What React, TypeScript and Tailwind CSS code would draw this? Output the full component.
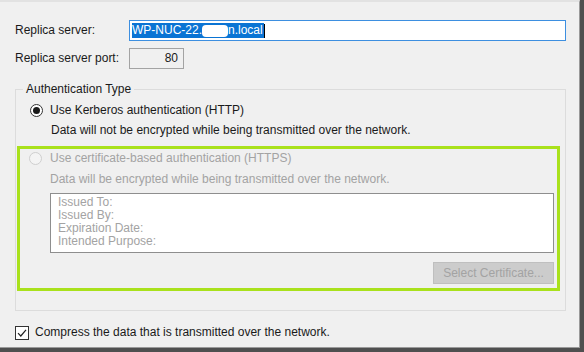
import React from "react";

export default function App() {
  return (
    <div className="w-[584px] h-[352px] flex bg-[#4f4f4f] font-['Liberation_Sans',sans-serif] text-[12px] leading-[15px] text-[#1a1a1a]">
      <div className="w-[580px] h-[348px] flex flex-col bg-[#f0f0f0] border-t-2 border-r border-b border-t-[#e2e2e2] border-r-[#9a9a9a] border-b-[#9a9a9a] pl-[15px] pr-[13px]">
        {/* server row */}
        <div className="flex items-center mt-[18px] h-[21px]">
          <span className="w-[114px]">Replica server:</span>
          <div className="flex-1 h-[21px] border border-[#3d8fe0] bg-white flex items-center pl-[2px]">
            <span className="flex items-center h-[15px] bg-[#0a74d4] text-white pr-[1px]">
              WP-NUC-22.
              <span className="inline-block w-[26px] h-[12px] bg-white rounded-sm" />
              n.local
            </span>
            <span className="w-px h-[14px] bg-black" />
          </div>
        </div>

        {/* port row */}
        <div className="flex items-center mt-[7px] h-[21px]">
          <span className="w-[114px]">Replica server port:</span>
          <div className="w-[55px] h-[21px] border border-[#a3a3a3] flex items-center justify-end pr-[5px]">
            80
          </div>
        </div>

        {/* group box */}
        <fieldset className="mt-[13px] border border-[#dcdcdc] pr-[5px] pb-[19px]">
          <legend className="ml-[7px] px-[3px]">Authentication Type</legend>

          <div className="flex items-center mt-[6px] ml-[14px]">
            <span className="w-[13px] h-[13px] rounded-full border border-[#333] bg-white flex items-center justify-center">
              <span className="w-[7px] h-[7px] rounded-full bg-[#1a1a1a]" />
            </span>
            <span className="ml-[7px]">Use Kerberos authentication (HTTP)</span>
          </div>
          <div className="ml-[35px] mt-[5px]">
            Data will not be encrypted while being transmitted over the network.
          </div>

          {/* highlighted area */}
          <div className="mt-[8px] ml-px border-[3px] border-[#a9e11c] pl-[9px] pr-[3px] pt-[2px] pb-[4px] text-[#a3a3a3]">
            <div className="flex items-center">
              <span className="w-[13px] h-[13px] rounded-full border border-[#cfcfcf] bg-[#f4f4f4]" />
              <span className="ml-[8px]">Use certificate-based authentication (HTTPS)</span>
            </div>
            <div className="ml-[21px] mt-[6px]">
              Data will be encrypted while being transmitted over the network.
            </div>
            <div className="ml-[21px] mt-[6px] h-[60px] border border-[#8e8e8e] bg-white pl-[7px] pt-[2px] leading-[13px]">
              <div>Issued To:</div>
              <div>Issued By:</div>
              <div>Expiration Date:</div>
              <div>Intended Purpose:</div>
            </div>
            <div className="flex justify-end mt-[9px]">
              <div className="w-[121px] h-[22px] bg-[#cccccc] border border-[#bfbfbf] flex items-center justify-center">
                Select Certificate...
              </div>
            </div>
          </div>
        </fieldset>

        {/* compress */}
        <div className="flex items-center mt-[14px]">
          <span className="w-[14px] h-[14px] border border-[#333] bg-white flex items-center justify-center">
            <svg width="10" height="10" viewBox="0 0 10 10">
              <path d="M1 5.2 L3.8 8 L9 1.8" fill="none" stroke="#222" strokeWidth="1.2" />
            </svg>
          </span>
          <span className="ml-[6px]">Compress the data that is transmitted over the network.</span>
        </div>
      </div>
    </div>
  );
}
